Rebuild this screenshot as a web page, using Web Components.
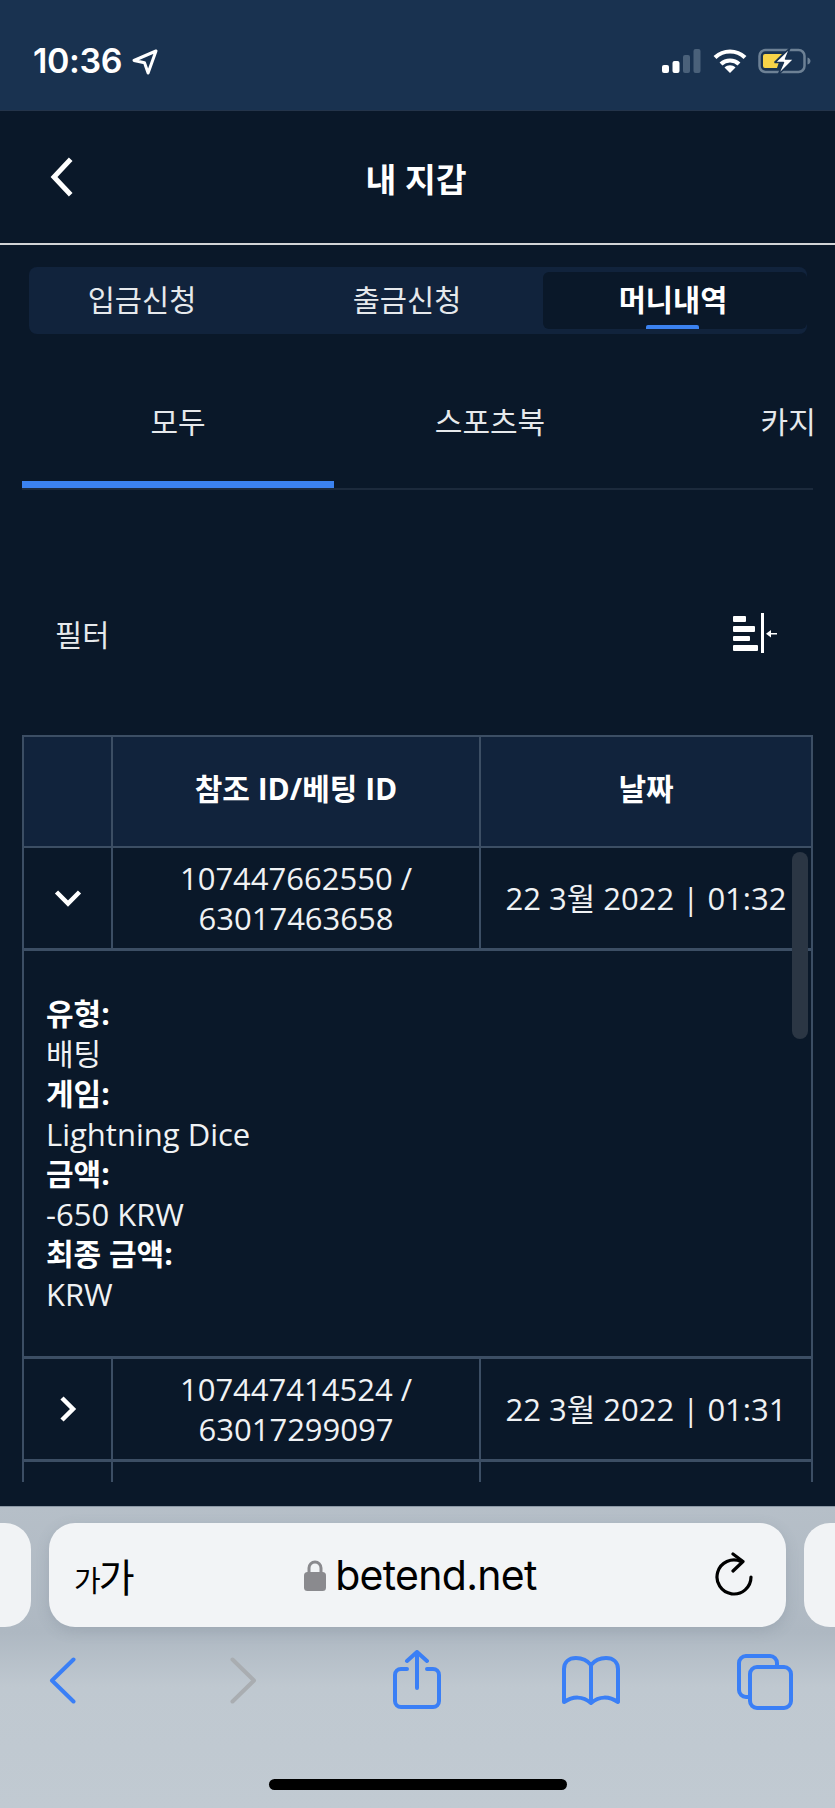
<!DOCTYPE html>
<html lang="ko">
<head>
<meta charset="utf-8">
<title>내 지갑</title>
<style>
  html, body { margin: 0; padding: 0; background: #0a1829; }
  body { font-family: "Open Sans", "Noto Sans CJK KR", sans-serif; color: #fff; }
  wallet-app { width: 835px; height: 1808px; }
</style>
</head>
<body>

<wallet-app>
  <status-bar time="10:36"></status-bar>
  <wallet-header title-text="내 지갑"></wallet-header>
  <wallet-tabs></wallet-tabs>
  <sub-tabs></sub-tabs>
  <filter-row></filter-row>
  <money-table>
    <money-row slot="rows" open ids="107447662550 / 63017463658" date="22 3월 2022 | 01:32"></money-row>
    <money-detail slot="rows"></money-detail>
    <money-row slot="rows" ids="107447414524 / 63017299097" date="22 3월 2022 | 01:31"></money-row>
    <money-row slot="rows" ids="107447380577 / 63017270041" date="22 3월 2022 | 01:30"></money-row>
  </money-table>
  <safari-bar></safari-bar>
</wallet-app>

<script>
const KR_FONT = '"Open Sans", "Noto Sans CJK KR", sans-serif';

class WalletApp extends HTMLElement {
  constructor() {
    super();
    this.attachShadow({ mode: "open" }).innerHTML = `
      <style>
        :host { display: flex; flex-direction: column; overflow: hidden; background: #0a1829; font-family: ${KR_FONT}; color: #fff; }
        ::slotted(*) { flex: none; }
      </style>
      <slot></slot>`;
  }
}

class StatusBar extends HTMLElement {
  connectedCallback() {
    this.attachShadow({ mode: "open" }).innerHTML = `
      <style>
        :host { display: flex; justify-content: space-between; align-items: flex-start; box-sizing: border-box; height: 111px; padding: 48px 23px 0 33px; background: #193250; border-bottom: 1px solid #24344a; }
        .left { display: flex; align-items: flex-start; }
        .time { font: 600 34px/26px Inter, sans-serif; letter-spacing: -.4px; }
        .loc { margin: 1px 0 0 10px; display: block; }
        .right { display: flex; align-items: flex-start; }
        svg { display: block; }
      </style>
      <div class="left">
        <span class="time">${this.getAttribute("time")}</span>
        <svg class="loc" width="26" height="26" viewBox="0 0 26 26"><path d="M24 2 2 11.5l10.5 2.2 3.6 10.3z" fill="none" stroke="#fff" stroke-width="3" stroke-linejoin="round"/></svg>
      </div>
      <div class="right">
        <svg width="39" height="26" viewBox="0 0 39 26">
          <rect x="0" y="17" width="7" height="8" rx="2" fill="#fff"/>
          <rect x="10.500" y="13" width="7" height="12" rx="2" fill="#fff"/>
          <rect x="21" y="7" width="7" height="18" rx="2" fill="#4a617a"/>
          <rect x="31.500" y="1" width="7" height="24" rx="2" fill="#4a617a"/>
        </svg>
        <svg style="margin-left:12px" width="34" height="26" viewBox="0 0 34 26" fill="none" stroke="#fff" stroke-width="4.200">
          <path d="M2 9.500c8.500-8 21.500-8 30 0"/>
          <path d="M8 16c5-4.700 13-4.700 18 0"/>
          <path d="M17 25 11.500 19.500c3-3 8-3 11 0z" fill="#fff" stroke="none"/>
        </svg>
        <svg style="margin-left:11px" width="54" height="27" viewBox="0 0 54 27">
          <rect x="1.500" y="2" width="45" height="22" rx="6" fill="none" stroke="#6d8195" stroke-width="2.500"/>
          <path d="M7 6h17l-8 8h5l-2 6H7a2 2 0 0 1-2-2V8a2 2 0 0 1 2-2z" fill="#f7d348"/>
          <path d="M49.500 9.500c2 .5 3 2 3 3.500s-1 3-3 3.500z" fill="#6d8195"/>
          <path d="M32 0 17 14.500h8.500L20 27l16-16h-8.500z" fill="#fff" stroke="#193250" stroke-width="1.500" stroke-linejoin="round"/>
        </svg>
      </div>`;
  }
}

class WalletHeader extends HTMLElement {
  connectedCallback() {
    this.attachShadow({ mode: "open" }).innerHTML = `
      <style>
        :host { display: flex; align-items: center; justify-content: center; position: relative; box-sizing: border-box; height: 134px; background: #0a1829; border-bottom: 2px solid #d2d4d6; }
        h1 { margin: 3px 0 0 -3px; font: 700 33.500px/40px ${KR_FONT}; }
        svg { position: absolute; left: 47px; top: 44px; }
      </style>
      <svg width="28" height="42" viewBox="0 0 28 42"><path d="M22 6 7 22l15 16" fill="none" stroke="#fff" stroke-width="5" stroke-linecap="square"/></svg>
      <h1>${this.getAttribute("title-text")}</h1>`;
  }
}

class WalletTabs extends HTMLElement {
  constructor() {
    super();
    this.attachShadow({ mode: "open" }).innerHTML = `
      <style>
        :host { display: block; padding: 22px 28px 0 29px; }
        .strip { display: grid; grid-template-columns: 226px 288px 1fr; height: 67px; box-sizing: border-box; padding: 5px 0; background: #11233c; border-radius: 8px; }
        .tab { display: flex; align-items: center; justify-content: center; font: 400 29.500px/40px ${KR_FONT}; color: #e6e9ec; padding-bottom: 2px; }
        .tab.mid { padding-left: 16px; }
        .tab.on { position: relative; padding-right: 4px; background: #0a1829; border-radius: 6px; color: #fff; font-weight: 700; }
        .tab.on::after { content: ""; position: absolute; left: 103px; bottom: 0; width: 53px; height: 4px; background: #3b82f0; border-radius: 2px 2px 0 0; }
      </style>
      <div class="strip">
        <div class="tab">입금신청</div>
        <div class="tab mid">출금신청</div>
        <div class="tab on">머니내역</div>
      </div>`;
  }
}

class SubTabs extends HTMLElement {
  constructor() {
    super();
    this.attachShadow({ mode: "open" }).innerHTML = `
      <style>
        :host { display: block; margin: 0 22px; overflow: hidden; border-bottom: 2px solid #1c2a3c; height: 156px; box-sizing: border-box; }
        .row { display: flex; width: 936px; height: 154px; }
        .tab { flex: 0 0 312px; box-sizing: border-box; height: 154px; padding-top: 68px; text-align: center; font: 400 30px/40px ${KR_FONT}; color: #e6e9ec; }
        .tab.on { border-bottom: 7px solid #3b82f0; }
      </style>
      <div class="row">
        <div class="tab on">모두</div>
        <div class="tab">스포츠북</div>
        <div class="tab">카지노</div>
      </div>`;
  }
}

class FilterRow extends HTMLElement {
  constructor() {
    super();
    this.attachShadow({ mode: "open" }).innerHTML = `
      <style>
        :host { display: flex; justify-content: space-between; align-items: flex-start; box-sizing: border-box; height: 245px; padding: 123px 58px 0 55px; }
        span { font: 400 29.500px/40px ${KR_FONT}; color: #e6e9ec; margin-top: 2px; }
        svg { display: block; }
      </style>
      <span>필터</span>
      <svg width="44" height="40" viewBox="0 0 44 40" fill="#fff">
        <rect x="0" y="3" width="13" height="6" rx="1"/>
        <rect x="0" y="13" width="22" height="6" rx="1"/>
        <rect x="0" y="23" width="17" height="5" rx="1"/>
        <rect x="0" y="32" width="25" height="6" rx="1"/>
        <rect x="28" y="0" width="3" height="40"/>
        <rect x="36" y="20" width="8" height="1.500"/>
        <path d="M33 20.700 38 17v7.400z"/>
      </svg>`;
  }
}

class MoneyTable extends HTMLElement {
  constructor() {
    super();
    this.attachShadow({ mode: "open" }).innerHTML = `
      <style>
        :host { display: block; position: relative; margin: 0 22px; height: 747px; overflow: hidden; }
        .frame { box-sizing: border-box; border: solid #3c4e64; border-width: 2px 2px 0; }
        .head { display: grid; grid-template-columns: 87px 2px 366px 2px 1fr; height: 111px; box-sizing: border-box; background: #11233c; font: 700 30px/40px ${KR_FONT}; border-bottom: 2px solid #3c4e64; }
        .head div { display: flex; align-items: center; justify-content: center; padding-bottom: 6px; }
        .head i { background: #3c4e64; }
        .bar { position: absolute; right: 5px; top: 117px; width: 16px; height: 187px; border-radius: 8px; background: #2b3644; }
      </style>
      <div class="frame">
        <div class="head"><div></div><i></i><div>참조 ID/베팅 ID</div><i></i><div>날짜</div></div>
        <slot name="rows"></slot>
      </div>
      <div class="bar"></div>`;
  }
}

class MoneyRow extends HTMLElement {
  connectedCallback() {
    const open = this.hasAttribute("open");
    const [ref, bet] = this.getAttribute("ids").split(" / ");
    const chevron = open ? "M2.500 8 14 19.500 25.500 8" : "M8 3 19 14 8 25";
    this.attachShadow({ mode: "open" }).innerHTML = `
      <style>
        :host { display: grid; grid-template-columns: 87px 2px 366px 2px 1fr; height: 103px; box-sizing: border-box; border-bottom: 3px solid #3c4e64; font: 400 31px/40px ${KR_FONT}; color: #f0f2f4; }
        div { display: flex; align-items: center; justify-content: center; text-align: center; white-space: nowrap; }
        i { background: #3c4e64; }
        svg { display: block; }
      </style>
      <div><svg width="28" height="28" viewBox="0 0 28 28"><path d="${chevron}" fill="none" stroke="#fff" stroke-width="4.500"/></svg></div>
      <i></i>
      <div>${ref} /<br>${bet}</div>
      <i></i>
      <div>${this.getAttribute("date")}</div>`;
  }
}

class MoneyDetail extends HTMLElement {
  constructor() {
    super();
    this.attachShadow({ mode: "open" }).innerHTML = `
      <style>
        :host { display: block; box-sizing: border-box; height: 408px; padding: 43px 22px 0; border-bottom: 3px solid #3c4e64; font: 400 31px/40px ${KR_FONT}; color: #f0f2f4; }
        b { display: block; font-size: 30px; font-weight: 700; color: #fff; }
        span { display: block; }
        .kr { font-size: 30px; }
      </style>
      <b>유형:</b><span class="kr">배팅</span>
      <b>게임:</b><span>Lightning Dice</span>
      <b>금액:</b><span>-650 KRW</span>
      <b>최종 금액:</b><span>KRW</span>`;
  }
}

class SafariBar extends HTMLElement {
  constructor() {
    super();
    this.attachShadow({ mode: "open" }).innerHTML = `
      <style>
        :host { display: block; box-sizing: border-box; margin-top: 24px; height: 302px; overflow: hidden; background: linear-gradient(#b6bfc8 0, #aeb8c2 125px, #bfc8d0 180px, #c1cad2 100%); border-top: 1px solid #8c98a5; }
        .fields { display: grid; grid-template-columns: 31px 737px 31px; gap: 18px; margin: 16px 0 0 0; height: 104px; }
        .side { background: #f1f3f5; }
        .side.l { border-radius: 0 26px 26px 0; }
        .side.r { border-radius: 26px 0 0 26px; }
        .url { display: flex; align-items: center; justify-content: space-between; padding: 0 33px 0 25px; background: #f2f4f6; border-radius: 26px; box-shadow: 0 4px 14px rgba(90,105,120,.2); color: #000; }
        .aa { font: 400 39px/44px "Noto Sans CJK KR", sans-serif; width: 64px; white-space: nowrap; letter-spacing: -2px; padding-top: 3px; }
        .aa small { font-size: 29px; }
        .site { display: flex; align-items: center; gap: 9px; font: 400 41px/44px Inter, sans-serif; letter-spacing: -.7px; margin-right: 12px; }
        .nav { display: flex; align-items: flex-start; padding: 0 0 0 49px; margin-top: 30px; height: 60px; }
        svg { display: block; flex: none; }
        .home { width: 298px; height: 11px; margin: 62px 0 0 269px; background: #000; border-radius: 6px; }
      </style>
      <div class="fields">
        <div class="side l"></div>
        <div class="url">
          <span class="aa"><small>가</small>가</span>
          <span class="site">
            <svg width="22" height="32" viewBox="0 0 22 32"><path d="M5 14V9a6 6 0 0 1 12 0v5" fill="none" stroke="#8a8a8e" stroke-width="3"/><rect x="0" y="13" width="22" height="19" rx="3.500" fill="#8a8a8e"/></svg>
            betend.net
          </span>
          <svg width="38" height="46" viewBox="0 0 38 46" fill="none" stroke="#000" stroke-width="3.200" stroke-linecap="round" stroke-linejoin="round">
            <path d="M26 9.500A17 17 0 1 0 36 25"/>
            <path d="M18 2l10 7.500-10 9.500"/>
          </svg>
        </div>
        <div class="side r"></div>
      </div>
      <div class="nav">
        <svg width="27" height="47" viewBox="0 0 27 47" fill="none" stroke="#3a7ff6" stroke-width="4" stroke-linecap="round" stroke-linejoin="round"><path d="M24.500 2.500 3 23.500l21.500 21"/></svg>
        <svg style="margin-left:154px" width="27" height="47" viewBox="0 0 27 47" fill="none" stroke="#a9adb1" stroke-width="4" stroke-linecap="round" stroke-linejoin="round"><path d="M2.500 2.500 24 23.500l-21.500 21"/></svg>
        <svg style="margin:-7px 0 0 136px" width="48" height="60" viewBox="0 0 48 60" fill="none" stroke="#3a7ff6" stroke-width="4" stroke-linecap="round" stroke-linejoin="round">
          <path d="M14 19H8a6 6 0 0 0-6 6v26a6 6 0 0 0 6 6h32a6 6 0 0 0 6-6V25a6 6 0 0 0-6-6h-6"/>
          <path d="M24 38V2M14 11l10-9 10 9"/>
        </svg>
        <svg style="margin:-1px 0 0 120px" width="60" height="50" viewBox="0 0 60 50" fill="none" stroke="#3a7ff6" stroke-width="4" stroke-linecap="round" stroke-linejoin="round">
          <path d="M30 9c-4-5-9-7-15-7C8 2 3 6 3 13v33c9-6 19-6 27 1 8-7 18-7 27-1V13c0-7-5-11-12-11-6 0-11 2-15 7zM30 9v38"/>
        </svg>
        <svg style="margin:-3px 0 0 116px" width="56" height="56" viewBox="0 0 56 56" fill="none" stroke="#3a7ff6" stroke-width="4" stroke-linejoin="round">
          <path d="M12 43H9a7 7 0 0 1-7-7V9a7 7 0 0 1 7-7h24a7 7 0 0 1 7 7v4"/>
          <rect x="13" y="13" width="41" height="41" rx="7"/>
        </svg>
      </div>
      <div class="home"></div>`;
  }
}

customElements.define("wallet-app", WalletApp);
customElements.define("status-bar", StatusBar);
customElements.define("wallet-header", WalletHeader);
customElements.define("wallet-tabs", WalletTabs);
customElements.define("sub-tabs", SubTabs);
customElements.define("filter-row", FilterRow);
customElements.define("money-table", MoneyTable);
customElements.define("money-row", MoneyRow);
customElements.define("money-detail", MoneyDetail);
customElements.define("safari-bar", SafariBar);
</script>
</body>
</html>
